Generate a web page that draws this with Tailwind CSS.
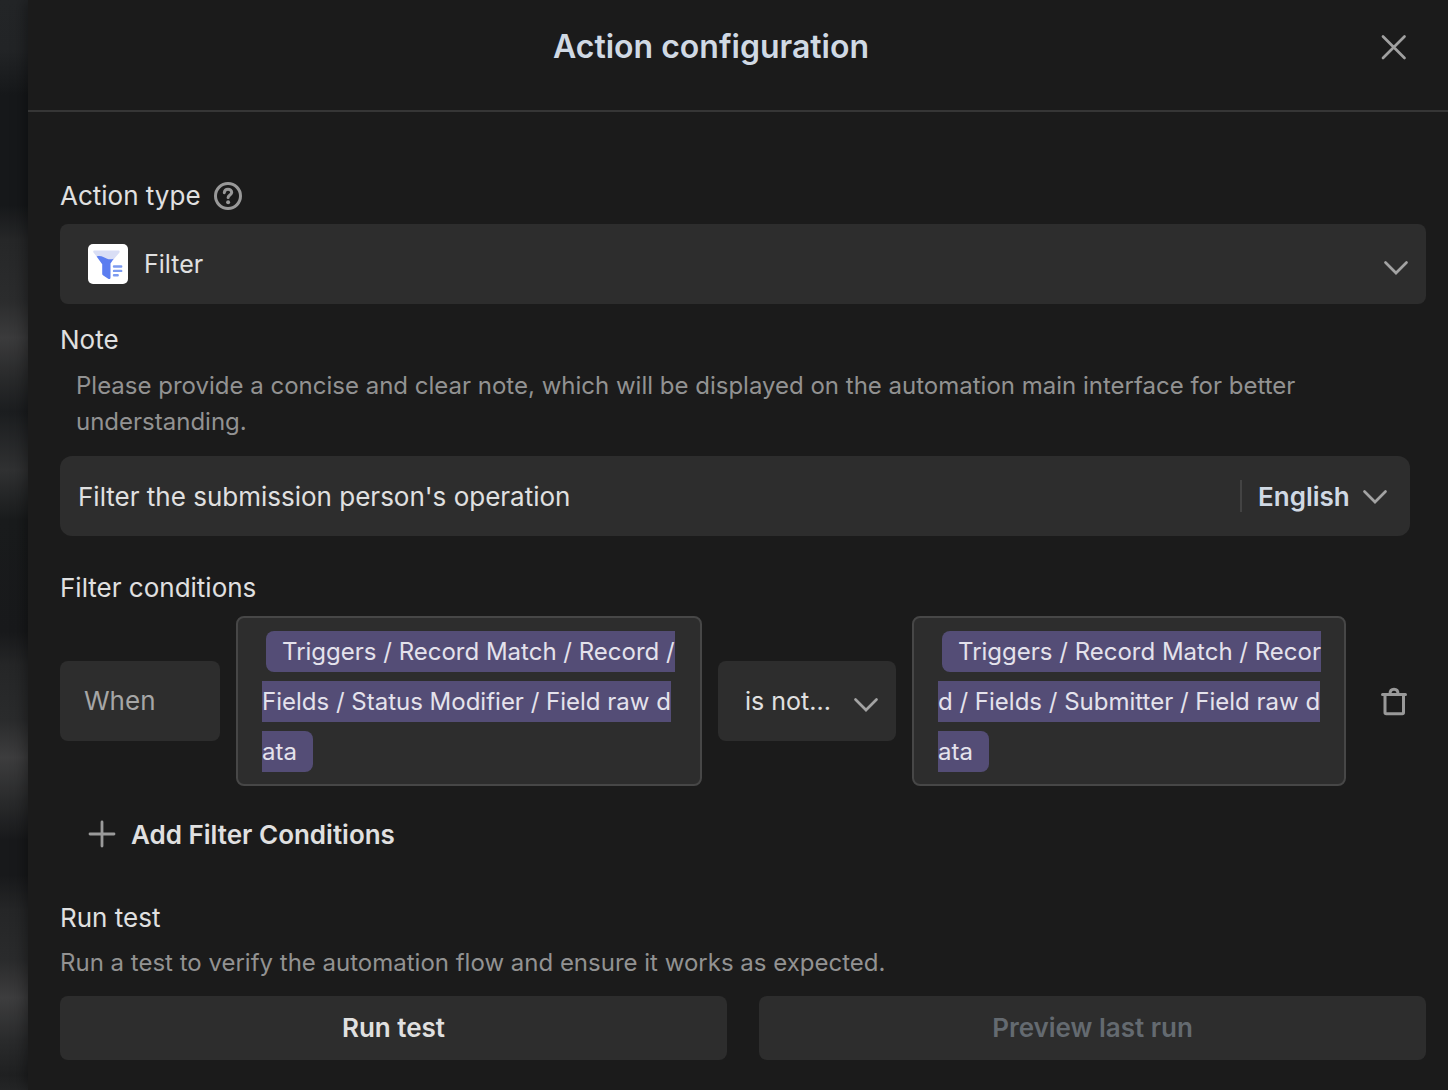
<!DOCTYPE html>
<html lang="en">
<head>
<meta charset="utf-8">
<meta name="viewport" content="width=device-width, initial-scale=1">
<title>Action configuration</title>
<script src="https://cdn.jsdelivr.net/npm/@tailwindcss/browser@4"></script>
</head>
<body class="flex min-h-screen bg-[#18191b] font-[Inter,sans-serif] text-[26px] leading-8 text-[#e0e0e0]">
  <div aria-hidden="true" class="w-7 shrink-0 bg-[linear-gradient(to_bottom,#232527_0px,#222426_50px,#16181a_95px,#16181a_205px,#262728_240px,#2b2c2d_300px,#3b3b3c_338px,#2a2b2c_375px,#1b1d1f_412px,#303132_470px,#191b1c_520px,#18191b_632px,#252627_665px,#2a2b2c_720px,#3d3d3e_757px,#2a2b2c_800px,#18191b_840px,#18191b_875px,#252627_910px,#2a2b2c_960px,#3d3d3e_998px,#2a2b2c_1040px,#1f2021_1075px,#242526_1090px)]"></div>

  <section class="relative min-w-0 flex-1 bg-[#1b1b1b] shadow-[-2px_0_14px_rgba(0,0,0,0.4)]">
    <header class="flex h-28 items-center border-b-2 border-[#363636] px-7 pb-4">
      <h1 class="flex-1 text-center text-[32px] leading-10 font-semibold text-[#d0d9e4]">Action configuration</h1>
      <button type="button" aria-label="Close" class="flex w-[54px] justify-center text-[#a0a0a0]">
        <svg class="size-8" viewBox="0 0 32 32" fill="none" stroke="currentColor" stroke-width="2.700" stroke-linecap="round"><path d="M6 5.500L27.500 27M27.500 5.500L6 27"/></svg>
      </button>
    </header>

    <form class="pt-[68px] pr-[22px] pb-[30px] pl-8">
      <div class="flex items-center gap-[11px]">
        <label for="type">Action type</label>
        <svg class="size-8 text-[#999]" viewBox="0 0 32 32" fill="none" stroke="currentColor" stroke-width="3" stroke-linecap="round" role="img" aria-label="Help"><circle cx="16" cy="16" r="12.500"/><path d="M12.300 12.700C12.500 10.500 14 9.300 16 9.300C18.100 9.300 19.700 10.600 19.700 12.500C19.700 14.800 16.200 15.200 16.100 17.600"/><circle cx="16.100" cy="22.200" r="2" fill="currentColor" stroke="none"/></svg>
      </div>
      <div class="mt-3 grid items-center rounded-lg bg-[#2d2d2d]">
        <select id="type" class="col-start-1 row-start-1 h-20 w-full appearance-none rounded-lg bg-transparent pl-21 text-[25px]"><option>Filter</option></select>
        <svg class="pointer-events-none col-start-1 row-start-1 ml-7 size-10" viewBox="0 0 40 40" aria-hidden="true">
          <rect width="40" height="40" rx="5" fill="#fff"/>
          <path d="M6.500 6.500H30.500C31.700 6.500 32 7.700 31.300 8.700L25.500 15.500C20 18 14 14 8.700 12.500L5.500 8.500C4.900 7.600 5.300 6.500 6.500 6.500Z" fill="#d9def5"/>
          <path d="M8.600 12.400C13 11 16 13.400 18.500 14.500C21 15.600 23.500 15.600 25.700 14.800L22.500 19.500V33.500C22.500 35 21.300 35.400 20.200 34.700L15.300 31.500C14.500 31 14.200 30.500 14.200 29.500V20.300Z" fill="#5b7df0"/>
          <path d="M26 22.500H33.200M26 26.900H33.200M26 31.300H29.700" stroke="#7c9bf0" stroke-width="2.400" stroke-linecap="round"/>
        </svg>
        <svg class="pointer-events-none col-start-1 row-start-1 mt-2 mr-3.5 size-8 justify-self-end text-[#a3a3a3]" viewBox="0 0 32 32" fill="none" stroke="currentColor" stroke-width="2.700" stroke-linecap="round" aria-hidden="true"><path d="M5.500 10.500L16 21L26.500 10.500"/></svg>
      </div>

      <label for="note" class="mt-5 block">Note</label>
      <p class="mt-3 px-4 text-2xl leading-9 text-[#929292]">Please provide a concise and clear note, which will be displayed on the automation main interface for better understanding.</p>
      <div class="mt-4 mr-4 flex h-20 items-center rounded-xl bg-[#2d2d2d]">
        <input id="note" type="text" value="Filter the submission person's operation" class="h-full min-w-0 flex-1 bg-transparent pl-[18px] outline-none">
        <div class="h-8 w-0.5 bg-[#434343]"></div>
        <div class="grid w-[168px] items-center">
          <select aria-label="Language" class="col-start-1 row-start-1 h-20 w-full appearance-none bg-transparent pt-0.5 pl-4 font-semibold text-[#d0d9e4]"><option>English</option></select>
          <svg class="pointer-events-none col-start-1 row-start-1 mt-0.5 mr-[19px] size-8 justify-self-end text-[#a3a3a3]" viewBox="0 0 32 32" fill="none" stroke="currentColor" stroke-width="2.700" stroke-linecap="round" aria-hidden="true"><path d="M5.500 10.500L16 21L26.500 10.500"/></svg>
        </div>
      </div>

      <h2 class="mt-9">Filter conditions</h2>
      <div class="mt-3 mr-4 flex items-center gap-4">
        <div class="flex h-20 w-40 shrink-0 items-center rounded-lg bg-[#2d2d2d] pl-6 text-[#a6a6a6]">When</div>
        <div class="min-w-0 flex-[416] rounded-lg border-2 border-[#474747] bg-[#2d2d2d] pt-[9px] pr-[22px] pb-[7px] pl-6 text-2xl leading-[50px] break-all text-[#e4e2ec]"><span class="ml-1 rounded-lg bg-[#544d76] px-4 py-1.5">Triggers / Record Match / Record / Fields / Status Modifier / Field raw data</span></div>
        <div class="grid w-[178px] shrink-0 items-center rounded-lg bg-[#2d2d2d]">
          <select aria-label="Operator" class="col-start-1 row-start-1 h-20 w-full appearance-none bg-transparent pl-[27px] text-[25px]"><option>is not...</option></select>
          <svg class="pointer-events-none col-start-1 row-start-1 mt-2 mr-3.5 size-8 justify-self-end text-[#a3a3a3]" viewBox="0 0 32 32" fill="none" stroke="currentColor" stroke-width="2.700" stroke-linecap="round" aria-hidden="true"><path d="M5.500 10.500L16 21L26.500 10.500"/></svg>
        </div>
        <div class="min-w-0 flex-[384] rounded-lg border-2 border-[#474747] bg-[#2d2d2d] pt-[9px] pr-[22px] pb-[7px] pl-6 text-2xl leading-[50px] break-all text-[#e4e2ec]"><span class="ml-1 rounded-lg bg-[#544d76] px-4 py-1.5">Triggers / Record Match / Record / Fields / Submitter / Field raw data</span></div>
        <button type="button" aria-label="Delete condition" class="ml-4 shrink-0 text-[#999]">
          <svg class="size-8" viewBox="0 0 32 32" fill="none" stroke="currentColor" stroke-width="3" stroke-linecap="round" stroke-linejoin="round"><path d="M4.500 9.500H27.500M7 9.500V27.500C7 28.300 7.400 28.700 8.200 28.700H24.300C25.100 28.700 25.500 28.300 25.500 27.500V9.500M12 9C12 6 13.500 4.200 16 4.200C18.500 4.200 20 6 20 9"/></svg>
        </button>
      </div>

      <button type="button" class="mt-[31px] ml-6 flex items-center gap-[11px] font-semibold">
        <svg class="size-9 text-[#9a9a9a]" viewBox="0 0 36 36" fill="none" stroke="currentColor" stroke-width="2.800" stroke-linecap="round" aria-hidden="true"><path d="M6 17H30M18 5V29"/></svg>
        Add Filter Conditions
      </button>

      <h2 class="mt-[49px]">Run test</h2>
      <p class="mt-[11px] text-2xl leading-9 text-[#929292]">Run a test to verify the automation flow and ensure it works as expected.</p>
      <div class="mt-[15px] grid grid-cols-2 gap-8">
        <button type="button" class="h-16 rounded-lg bg-[#2d2d2d] font-semibold">Run test</button>
        <button type="button" disabled class="h-16 rounded-lg bg-[#2d2d2d] font-semibold text-[#646a70]">Preview last run</button>
      </div>
    </form>
  </section>
</body>
</html>
